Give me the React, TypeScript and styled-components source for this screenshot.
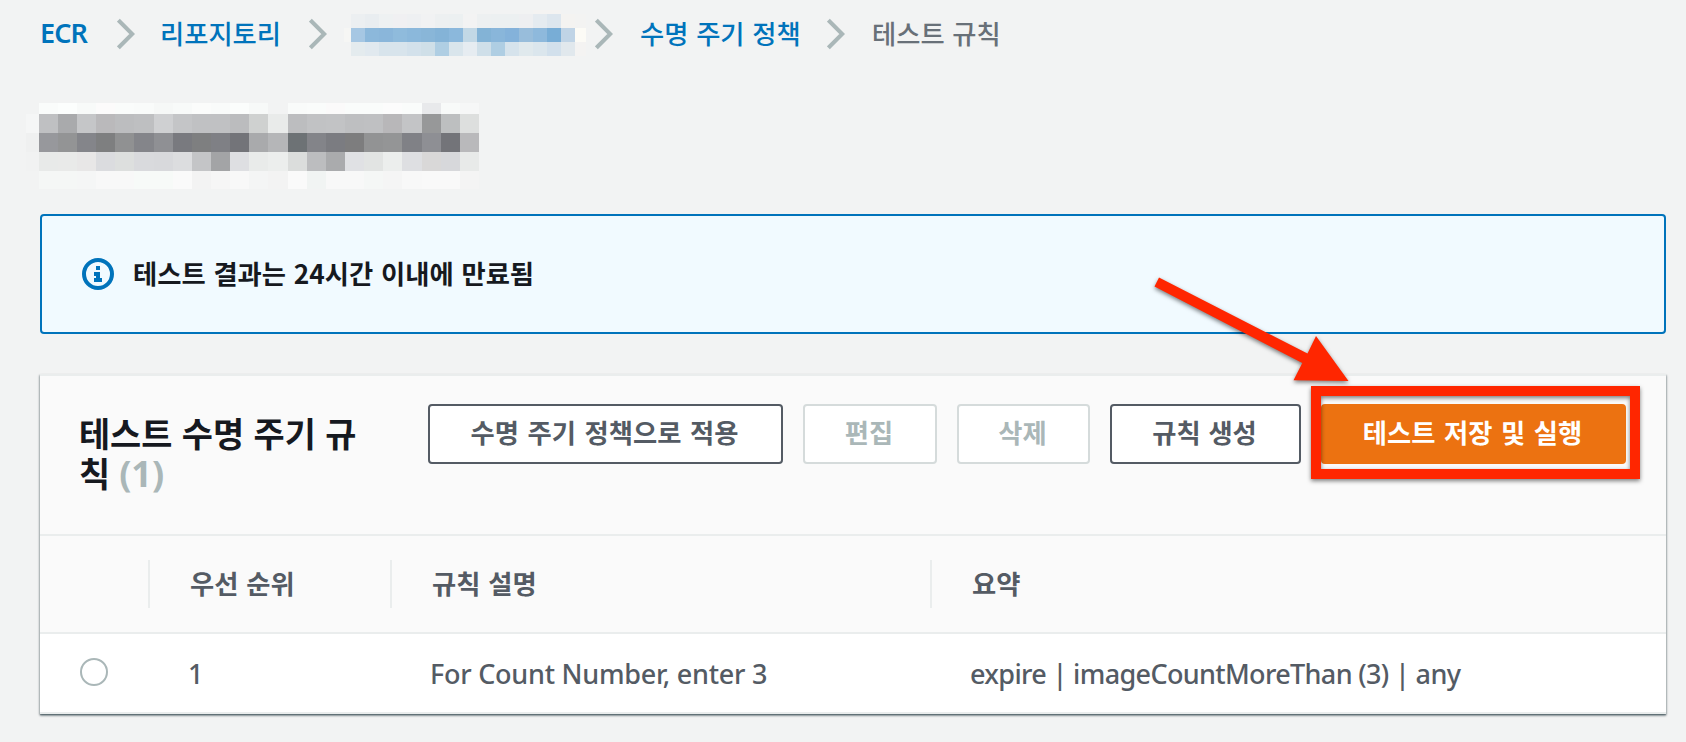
import React from 'react';
import styled, { createGlobalStyle, css } from 'styled-components';

const GlobalStyle = createGlobalStyle`
  * { box-sizing: border-box; }
  body {
    margin: 0;
    background: #f2f3f3;
    color: #545b64;
    font-family: "Noto Sans", "Noto Sans CJK KR", sans-serif;
    font-size: 28px;
    overflow: hidden;
  }
`;

const Page = styled.div`
  position: relative;
  height: 742px;
  padding: 10px 20px 0 40px;
  background: #f2f3f3;
`;

const Ko = styled.span<{ $space?: number }>`
  font-family: "Noto Sans CJK KR", sans-serif;
  font-size: 0.94em;
  word-spacing: ${(p) => p.$space ?? 1.8}px;
`;

const Breadcrumbs = styled.nav`
  display: flex;
  height: 48px;
`;

const Crumb = styled.a<{ $width: number; $last?: boolean }>`
  flex: none;
  width: ${(p) => p.$width}px;
  line-height: 45px;
  white-space: nowrap;
  font-weight: 500;
  color: ${(p) => (p.$last ? '#687078' : '#0073bb')};
`;

const Latin = styled.span`
  font-family: "Noto Sans", sans-serif;
  font-size: 27px;
  font-weight: 600;
  letter-spacing: -0.9px;
`;

const Chevron = styled.svg<{ $gap: number }>`
  flex: none;
  width: 18px;
  height: 32px;
  margin: 8px ${(p) => p.$gap}px 0 0;
`;

const Mosaic = styled.div<{ $cols: string; $rows: string }>`
  display: grid;
  flex: none;
  grid-template-columns: ${(p) => p.$cols};
  grid-template-rows: ${(p) => p.$rows};
`;

const CrumbMosaic = styled(Mosaic)`
  width: 251px;
  margin-left: -1px;
  align-self: flex-start;
`;

const TitleMosaic = styled(Mosaic)`
  margin: 45px 0 25px -14px;
`;

const Cell = styled.span<{ $color: string }>`
  background: ${(p) => p.$color};
`;

const Alert = styled.section`
  display: flex;
  align-items: center;
  height: 120px;
  padding-left: 40px;
  border: 2px solid #0073bb;
  border-radius: 4px;
  background: #f1faff;
  color: #16191f;
  font-weight: 700;
  white-space: nowrap;
`;

const AlertText = styled.div`
  padding-bottom: 4px;
`;

const InfoIcon = styled.svg`
  width: 32px;
  height: 32px;
  margin-right: 19px;
`;

const Panel = styled.section`
  height: 340px;
  margin-top: 40px;
  border-top: 2px solid #eaeded;
  background: #fff;
  box-shadow: 0 2px 2px 0 rgba(0, 28, 36, 0.3), 1px 1px 2px 0 rgba(0, 28, 36, 0.2),
    -1px 1px 2px 0 rgba(0, 28, 36, 0.2), 0 1px 1px rgba(0, 28, 36, 0.25);
`;

const PanelHeader = styled.header`
  display: flex;
  justify-content: space-between;
  height: 160px;
  padding: 28px 40px 0 39px;
  border-bottom: 2px solid #eaeded;
  background: #fafafa;
`;

const Title = styled.h2`
  width: 310px;
  margin: 9px 0 0;
  font-size: 36px;
  line-height: 40px;
  font-weight: 700;
  color: #16191f;
`;

const TitleLine = styled.div`
  display: flex;
  align-items: baseline;
  height: 40px;
  white-space: nowrap;
`;

const Count = styled.span`
  color: #aab7b8;
  margin-left: 9px;
`;

const Actions = styled.div`
  display: flex;
  gap: 20px;
`;

const Button = styled.button<{ $width: number; $kind?: 'primary' }>`
  width: ${(p) => p.$width}px;
  height: 60px;
  padding: 0 2px 6px 0;
  border: 2px solid #545b64;
  border-radius: 4px;
  background: #fff;
  color: #545b64;
  font: 700 28px "Noto Sans CJK KR", sans-serif;
  white-space: nowrap;
  &:disabled {
    border-color: #d5dbdb;
    color: #aab7b8;
  }
  ${(p) =>
    p.$kind === 'primary' &&
    css`
      border-color: #ec7211;
      background: #ec7211;
      color: #fff;
    `}
`;

const columns = '108px 242px 540px 1fr';

const HeadRow = styled.div`
  display: grid;
  grid-template-columns: ${columns};
  align-items: center;
  height: 98px;
  border-bottom: 2px solid #eaeded;
  background: #fafafa;
`;

const HeadCell = styled.div`
  height: 48px;
  padding-left: 40px;
  border-left: 2px solid #eaeded;
  line-height: 45px;
  font-weight: 700;
  &:first-child {
    border-left-color: transparent;
  }
`;

const Row = styled.div`
  display: grid;
  grid-template-columns: ${columns};
  align-items: center;
  height: 80px;
  border-bottom: 2px solid #eaeded;
`;

const RowCell = styled.div<{ $tight?: number }>`
  padding: 2px 0 0 40px;
  line-height: 40px;
  font-family: "Noto Sans", sans-serif;
  font-size: 27px;
  font-weight: 500;
  letter-spacing: ${(p) => p.$tight ?? 0}px;
  white-space: nowrap;
`;

const Radio = styled.span`
  display: block;
  width: 28px;
  height: 28px;
  margin: -2px 0 0 40px;
  border: 2px solid #aab7b8;
  border-radius: 50%;
`;

const Highlight = styled.div`
  position: absolute;
  left: 1311px;
  top: 386px;
  width: 329px;
  height: 93px;
  border: 10px solid #ff2600;
  filter: drop-shadow(0 2px 2px rgba(0, 0, 0, 0.5));
`;

const Arrow = styled.svg`
  position: absolute;
  left: 1140px;
  top: 265px;
  width: 220px;
  height: 125px;
  filter: drop-shadow(0 2px 2px rgba(0, 0, 0, 0.5));
`;

const crumbCells = [
  '- - - - - - - - - - - - - - #f4f3f2 #f4f3f2 - -',
  '- #eceff1 #e9edf0 #eef1f2 #f0f0f2 #eef0f2 #f1f2f3 #edf0f1 #ecf0f1 #f3f3f3 #edf0f1 #ecf0f1 #ecf0f1 #eeeff1 #e5ebf0 #dde6ee #f4f3f1 #f3f3f2',
  '#f6f6f4 #a6c7e3 #8cb8db #8ab6da #8fbbdc #8bb8db #89b6d8 #84b3d7 #8bb8dc #c2d8e6 #83b3d6 #89b6da #84b2da #98bddb #8eb9dc #78add6 #c0d4e6 #fcfbf6',
  '- #e4ebee #e1e9ef #d8e4ec #d8e4ec #d3e1eb #cfdfe8 #afcee3 #d9e5ec #e6ecf1 #cfdfe9 #afcee3 #d6e3ec #e0e9ed #dbe6ed #d2e0ec #e1e8ed #f4f3f2',
].map((r) => r.split(' '));

const titleCells = [
  '- #fafcfb #fcfefd #f8faf9 #fcfbfb #fafcfb #f9fbfa #f6f8f7 #f8faf9 #fbfcfb #f9fbfa #fbfdfc #f7f9f8 #f2f3f3 #f9fbfa #fafcfb #fbfafa #fafcfb #fafcfb #fcfcfc #fafcfb #e8e9eb #f8faf9 #f6f7f7',
  '#f5f6f6 #bfc0c2 #a9aaac #c5c6c8 #bab9bb #bcbdbf #bebfc1 #cfd0d2 #c4c5c7 #c0c1c3 #c0c1c3 #bbbcbe #cfd1d0 #e9ebea #bcbdbf #c1c2c4 #c2c3c5 #bebfc1 #bfc0c2 #b8b7b9 #c3c4c6 #979899 #bdbfc0 #dddfde',
  '#eff0f0 #97989c #939495 #84858a #7e7f80 #909192 #84858a #8f9094 #797a7f #7e7f80 #7f8085 #737479 #a9aaac #b5b6b8 #6d7275 #838489 #7b7c81 #7d7d7e #929394 #949596 #808186 #8e8f94 #737479 #b9b9bb',
  '#f1f2f2 #e8eae9 #e9eae9 #e8e7e7 #dbdcdf #dddfde #d9dadd #d8d9dc #dcdddf #c4c5c7 #a3a4a6 #dedfe2 #e9ebea #eceeed #dbdddc #bcbdbf #aaabad #e0e1e4 #e2e4e3 #eceeed #dedfe2 #d9d8d8 #d7d8db #e8eae9',
  '- #f5f7f6 #f5f7f6 #f5f6f6 #f8f8f8 #f8f8f8 #f7faf8 #f7faf8 #fafafa #f3f3f3 #f6f6f6 #f8f8f8 #f4f5f5 #f3f3f3 #fafafa #f1f4f3 #f8f8f8 #f8f8f8 #f5f7f6 #f5f5f5 #f8f8f8 #f9f9f9 #f9f9f9 #f4f4f4',
].map((r) => r.split(' '));

const cells = (rows: string[][]) =>
  rows.flatMap((row, y) =>
    row.map((c, x) => <Cell key={`${y}-${x}`} $color={c === '-' ? 'transparent' : c} />)
  );

const Separator = ({ gap }: { gap: number }) => (
  <Chevron $gap={gap} viewBox="0 0 18 32" fill="none" stroke="#aab7b8" strokeWidth="4">
    <path d="M1.4 2.2 15.2 16 1.4 29.8" />
  </Chevron>
);

export default function App() {
  return (
    <>
      <GlobalStyle />
      <Page>
        <Breadcrumbs>
          <Crumb $width={77}><Latin>ECR</Latin></Crumb>
          <Separator gap={25} />
          <Crumb $width={149}><Ko>리포지토리</Ko></Crumb>
          <Separator gap={18} />
          <CrumbMosaic $cols="7px repeat(16, 14.03px) 11px" $rows="4px 14px 14px 14px">
            {cells(crumbCells)}
          </CrumbMosaic>
          <Separator gap={27} />
          <Crumb $width={187}><Ko>수명 주기 정책</Ko></Crumb>
          <Separator gap={27} />
          <Crumb $width={150} $last><Ko>테스트 규칙</Ko></Crumb>
        </Breadcrumbs>
        <TitleMosaic $cols="12.7px repeat(23, 19.15px)" $rows="11px 19px 19px 19px 18px">
          {cells(titleCells)}
        </TitleMosaic>
        <Alert>
          <InfoIcon viewBox="0 0 32 32">
            <circle cx="16" cy="16" r="14" fill="none" stroke="#0073bb" strokeWidth="4" />
            <path d="M14 8h4v4h-4zM12 14h6v6h2v4h-8v-4h2v-2h-2z" fill="#0073bb" />
          </InfoIcon>
          <AlertText><Ko>테스트 결과는 24시간 이내에 만료됨</Ko></AlertText>
        </Alert>
        <Panel>
          <PanelHeader>
            <Title>
              <TitleLine><Ko>테스트 수명 주기 규</Ko></TitleLine>
              <TitleLine>
                <Ko>칙</Ko>
                <Count>(1)</Count>
              </TitleLine>
            </Title>
            <Actions>
              <Button $width={355}><Ko $space={2.6}>수명 주기 정책으로 적용</Ko></Button>
              <Button $width={134} disabled><Ko>편집</Ko></Button>
              <Button $width={133} disabled><Ko>삭제</Ko></Button>
              <Button $width={191}><Ko>규칙 생성</Ko></Button>
              <Button $width={305} $kind="primary"><Ko $space={2.6}>테스트 저장 및 실행</Ko></Button>
            </Actions>
          </PanelHeader>
          <HeadRow>
            <HeadCell />
            <HeadCell><Ko>우선 순위</Ko></HeadCell>
            <HeadCell><Ko>규칙 설명</Ko></HeadCell>
            <HeadCell><Ko>요약</Ko></HeadCell>
          </HeadRow>
          <Row>
            <Radio />
            <RowCell>1</RowCell>
            <RowCell $tight={-0.25}>For Count Number, enter 3</RowCell>
            <RowCell $tight={-0.65}>expire | imageCountMoreThan (3) | any</RowCell>
          </Row>
        </Panel>
        <Highlight />
        <Arrow viewBox="0 0 220 125">
          <path d="M19 12.5 167.5 88.5 176 71 208.5 116 153.5 115.3 162.3 98 14.5 21.5z" fill="#ff2600" />
        </Arrow>
      </Page>
    </>
  );
}
